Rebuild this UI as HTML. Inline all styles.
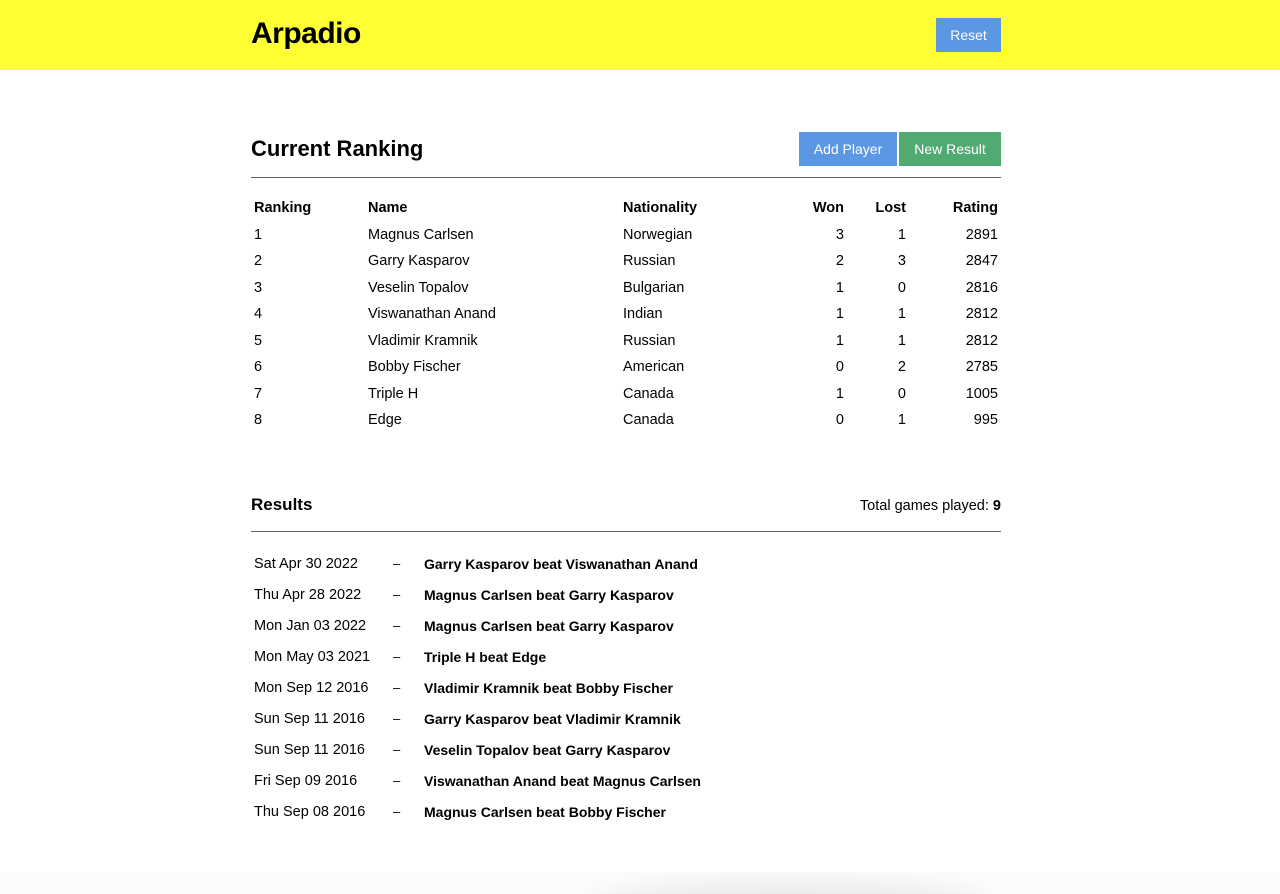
<!DOCTYPE html>
<html style="overflow:hidden;height:894px"><head><meta charset="utf-8"><style>
*{box-sizing:border-box;margin:0;padding:0}
body{width:1280px;height:894px;overflow:hidden;background:#fff;font-family:"Liberation Sans",sans-serif;color:#000;position:relative}
.hdr{height:70px;background:#ffff33;position:relative}
.logo{position:absolute;left:251px;top:17px;font-size:30px;font-weight:bold;letter-spacing:-0.5px}
.btn{position:absolute;color:#fff;font-size:14px;text-align:center;line-height:34px;height:34px}
.abs{position:absolute;white-space:nowrap}
.hr{position:absolute;left:251px;width:750px;height:1px;background:#666}
.row{position:absolute;left:0;width:1280px;font-size:14.5px;height:20px;line-height:20px}
.row span{position:absolute;white-space:nowrap}
.b{font-weight:bold}
.res .b{font-size:14px}
.d{font-size:13px}
.shadow{position:absolute;left:0;top:872px;width:1280px;height:22px;background:#fcfcfc;overflow:hidden}
.shadow2{position:absolute;left:600px;top:22px;width:380px;height:30px;border-radius:50%;box-shadow:0 0 25px 12px rgba(0,0,0,0.08);background:#e4e4e4}
</style></head><body>
<div class="hdr"><div class="logo">Arpadio</div>
<div class="btn" style="left:936px;top:18px;width:65px;background:#5b97e3">Reset</div></div>
<div class="abs b" style="left:251px;top:136px;font-size:22px">Current Ranking</div>
<div class="btn" style="left:799px;top:132px;width:98px;background:#5b97e3">Add Player</div>
<div class="btn" style="left:899px;top:132px;width:102px;background:#52aa73">New Result</div>
<div class="hr" style="top:177px"></div>
<div class="row b" style="top:198px"><span style="left:254px">Ranking</span><span style="left:368px">Name</span><span style="left:623px">Nationality</span><span style="right:436px">Won</span><span style="right:374px">Lost</span><span style="right:282px">Rating</span></div>
<div class="row" style="top:225px"><span style="left:254px">1</span><span style="left:368px">Magnus Carlsen</span><span style="left:623px">Norwegian</span><span style="right:436px">3</span><span style="right:374px">1</span><span style="right:282px">2891</span></div>
<div class="row" style="top:251px"><span style="left:254px">2</span><span style="left:368px">Garry Kasparov</span><span style="left:623px">Russian</span><span style="right:436px">2</span><span style="right:374px">3</span><span style="right:282px">2847</span></div>
<div class="row" style="top:278px"><span style="left:254px">3</span><span style="left:368px">Veselin Topalov</span><span style="left:623px">Bulgarian</span><span style="right:436px">1</span><span style="right:374px">0</span><span style="right:282px">2816</span></div>
<div class="row" style="top:304px"><span style="left:254px">4</span><span style="left:368px">Viswanathan Anand</span><span style="left:623px">Indian</span><span style="right:436px">1</span><span style="right:374px">1</span><span style="right:282px">2812</span></div>
<div class="row" style="top:331px"><span style="left:254px">5</span><span style="left:368px">Vladimir Kramnik</span><span style="left:623px">Russian</span><span style="right:436px">1</span><span style="right:374px">1</span><span style="right:282px">2812</span></div>
<div class="row" style="top:357px"><span style="left:254px">6</span><span style="left:368px">Bobby Fischer</span><span style="left:623px">American</span><span style="right:436px">0</span><span style="right:374px">2</span><span style="right:282px">2785</span></div>
<div class="row" style="top:384px"><span style="left:254px">7</span><span style="left:368px">Triple H</span><span style="left:623px">Canada</span><span style="right:436px">1</span><span style="right:374px">0</span><span style="right:282px">1005</span></div>
<div class="row" style="top:410px"><span style="left:254px">8</span><span style="left:368px">Edge</span><span style="left:623px">Canada</span><span style="right:436px">0</span><span style="right:374px">1</span><span style="right:282px">995</span></div>

<div class="abs b" style="left:251px;top:495px;font-size:17px">Results</div>
<div class="abs" style="right:279px;top:498px;font-size:14.5px">Total games played: <b>9</b></div>
<div class="hr" style="top:531px"></div>

<div class="res">
<div class="row" style="top:554px"><span style="left:254px">Sat Apr 30 2022</span><span class="d" style="left:393px">–</span><span class="b" style="left:424px">Garry Kasparov beat Viswanathan Anand</span></div>
<div class="row" style="top:585px"><span style="left:254px">Thu Apr 28 2022</span><span class="d" style="left:393px">–</span><span class="b" style="left:424px">Magnus Carlsen beat Garry Kasparov</span></div>
<div class="row" style="top:616px"><span style="left:254px">Mon Jan 03 2022</span><span class="d" style="left:393px">–</span><span class="b" style="left:424px">Magnus Carlsen beat Garry Kasparov</span></div>
<div class="row" style="top:647px"><span style="left:254px">Mon May 03 2021</span><span class="d" style="left:393px">–</span><span class="b" style="left:424px">Triple H beat Edge</span></div>
<div class="row" style="top:678px"><span style="left:254px">Mon Sep 12 2016</span><span class="d" style="left:393px">–</span><span class="b" style="left:424px">Vladimir Kramnik beat Bobby Fischer</span></div>
<div class="row" style="top:709px"><span style="left:254px">Sun Sep 11 2016</span><span class="d" style="left:393px">–</span><span class="b" style="left:424px">Garry Kasparov beat Vladimir Kramnik</span></div>
<div class="row" style="top:740px"><span style="left:254px">Sun Sep 11 2016</span><span class="d" style="left:393px">–</span><span class="b" style="left:424px">Veselin Topalov beat Garry Kasparov</span></div>
<div class="row" style="top:771px"><span style="left:254px">Fri Sep 09 2016</span><span class="d" style="left:393px">–</span><span class="b" style="left:424px">Viswanathan Anand beat Magnus Carlsen</span></div>
<div class="row" style="top:802px"><span style="left:254px">Thu Sep 08 2016</span><span class="d" style="left:393px">–</span><span class="b" style="left:424px">Magnus Carlsen beat Bobby Fischer</span></div>
</div>
<div class="shadow"><div class="shadow2"></div></div>
</body></html>
